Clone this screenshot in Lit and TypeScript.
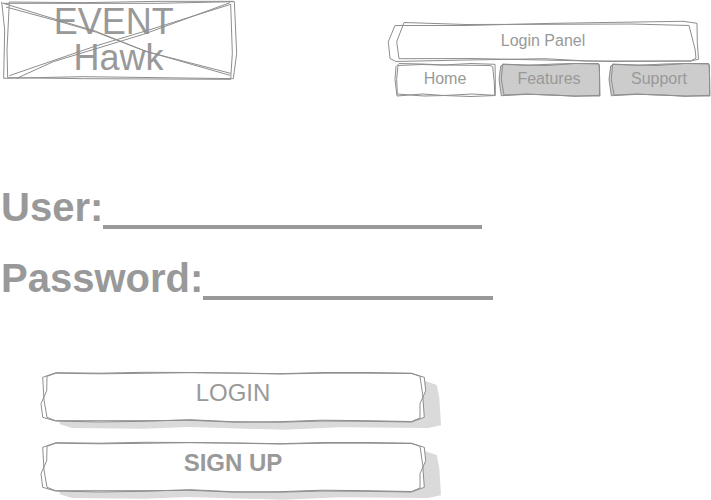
import { LitElement, html, css, svg } from "lit";
import { customElement, property } from "lit/decorators.js";

interface Sketch {
  width: number;
  height: number;
  shadow?: string;
  strokes: string[];
}

const logoSketch: Sketch = {
  width: 711,
  height: 240,
  strokes: [
    "M5 5L14 90L11 235L250 230L700 236L710 160L703 5L470 10L8 10",
    "M28 6L250 8L480 4L702 4M28 6L21 150L23 233L250 236L692 238L697 160L692 12",
    "M10 10L180 62L285 93L435 153L690 226M18 21L180 65L290 97L440 155L692 220",
    "M690 8L430 103L160 185L50 235M692 13L440 92L290 137L28 227",
  ],
};

const panelSketch: Sketch = {
  width: 312,
  height: 42,
  strokes: [
    "M8 5.5L79 5.5L167 3.3L296 1.3L310 3.3L310.3 22.7L311.5 39.3L304 41L200 41L158 38.7L64 40.3L9 41.5L3 38.5L1.3 21.7Z",
    "M17 2.5L79 4.5L158 4.3L245 4L302 5.5L308 29L309 38L304 41L226 41.5L85 38.5L12 38.7L9.7 21.7Z",
  ],
};

const homeSketch: Sketch = {
  width: 102,
  height: 36,
  strokes: [
    "M5 1.5L28 2L49 3L77 1.5L101 2.3L101.3 17.3L101.3 33.5L77 34.5L50 33.5L28 32L3 34L1 17.3L2 4.5Z",
    "M4 3.5L28 2.5L49 3L96 3.5L98.7 4.7L100.3 20.7L100.7 33.3L78 32L50 33.5L30 34L3.3 32L2.7 17.3Z",
  ],
};

const tabSketch: Sketch = {
  width: 102,
  height: 36,
  strokes: [
    "M4.7 2L29 3.3L57 2L77 1.5L101 2L101.7 17L102 34L77 34L48 33L29 32L6 33L3.3 17.3Z",
    "M2.7 4L5 2.5L29 3L49 3.5L77 1.5L100.5 1.5L101.5 4L101.5 33.3L77 34.3L56 33L30 32.3L3.3 33.7L1 17.3Z",
  ],
};

const buttonSketch: Sketch = {
  width: 386,
  height: 51,
  shadow:
    "M19 49L20 52.3L32 56L104 56.7L149 55L243 57.7L300 55.3L388 56L401 53.3L399.3 25.7L396.7 13L385 9L300 9Z",
  strokes: [
    "M16 .7L60 1.2L104 .3L150 .5L196 1.2L240 2L284 1.2L328 1.2L371.5 1.5L384.3 5.3L385.7 18.7L380 31.7L380 46L371.5 49.5L326 48.7L282 48.2L240 49.7L196 50.2L150 48.3L104 48.7L60 48.7L15.5 48.7L7 45.3L4 28L2.7 5.3Z",
    "M16 1.2L60 1.8L104 1.3L150 .7L196 1L240 1.7L284 .5L328 .5L371.5 1.2L380 4.3L382.7 22.7L384.3 45.3L371.5 50L326 49.3L282 49L240 50.2L192 49.7L150 47.7L104 49.3L60 50L15.5 49L2.7 45.3L1 31.7L6.7 18.7L7 4.3Z",
  ],
};

@customElement("sketch-frame")
class SketchFrame extends LitElement {
  @property({ attribute: false }) sketch: Sketch = panelSketch;

  static styles = css`
    :host {
      position: absolute;
      inset: 0;
      pointer-events: none;
    }
    .drawing {
      display: block;
      width: 100%;
      height: 100%;
      overflow: visible;
    }
    .face {
      fill: var(--sketch-fill, none);
    }
    .line {
      fill: none;
      stroke: #8e8e8e;
      stroke-width: 1;
      vector-effect: non-scaling-stroke;
    }
    .shadow {
      fill: #dadada;
    }
  `;

  render() {
    const { width, height, shadow, strokes } = this.sketch;
    return html`<svg
      class="drawing"
      viewBox="0 0 ${width} ${height}"
      preserveAspectRatio="none"
      aria-hidden="true"
    >
      ${shadow ? svg`<path class="shadow" d=${shadow} />` : null}
      ${strokes.map((d) => svg`<path class="face" d=${d} />`)}
      ${strokes.map((d) => svg`<path class="line" d=${d} />`)}
    </svg>`;
  }
}

@customElement("app-root")
class AppRoot extends LitElement {
  static styles = css`
    :host {
      display: block;
      box-sizing: border-box;
      min-height: 100vh;
      background: #fff;
      color: #999;
      font-family: "Liberation Sans", Arial, sans-serif;
    }
    .header {
      display: flex;
      justify-content: space-between;
      align-items: flex-start;
      gap: 24px;
    }
    .logo {
      position: relative;
      box-sizing: border-box;
      flex: 0 0 237px;
      height: 80px;
      margin: 0;
      padding-top: 4px;
      font-size: 36px;
      line-height: 36px;
      font-weight: 400;
      text-align: center;
      white-space: pre;
    }
    .side {
      flex: 0 1 324px;
      padding-top: 20px;
    }
    .panel,
    .tab {
      position: relative;
      box-sizing: border-box;
      font-size: 16px;
      line-height: 20px;
      font-weight: 400;
      text-align: center;
    }
    .panel {
      height: 42px;
      margin: 0 12px 0 0;
      padding-top: 11px;
    }
    .tabs {
      display: flex;
      gap: 2px;
      padding: 0 1px 0 7px;
    }
    .tab {
      flex: 1;
      height: 36px;
      padding-top: 7px;
      color: inherit;
      text-decoration: none;
    }
    .muted {
      --sketch-fill: #ccc;
    }
    .apart {
      margin-left: 6px;
    }
    .label {
      position: relative;
    }
    .form {
      margin-top: 85px;
      padding: 0 1px;
    }
    .field {
      display: flex;
      height: 48px;
      margin-bottom: 23px;
      font-size: 40px;
      line-height: 48px;
      font-weight: 700;
    }
    .input {
      box-sizing: border-box;
      flex: 0 1 379px;
      min-width: 0;
      height: 46px;
      margin: 0;
      padding: 0;
      border: 0;
      border-bottom: 4px solid #999;
      border-radius: 0;
      outline: 0;
      background: none;
      color: inherit;
      font: inherit;
    }
    .short {
      flex-basis: 290px;
    }
    .actions {
      display: flex;
      flex-direction: column;
      gap: 19px;
      max-width: 386px;
      margin: 70px 0 0 39px;
      padding-bottom: 7px;
    }
    .button {
      --sketch-fill: #fff;
      position: relative;
      box-sizing: border-box;
      height: 51px;
      margin: 0;
      padding: 0 0 9px;
      border: 0;
      background: none;
      color: inherit;
      font-family: inherit;
      font-size: 24px;
      line-height: 28px;
      font-weight: 400;
      cursor: pointer;
    }
    .strong {
      font-weight: 700;
    }
  `;

  render() {
    return html`
      <header class="header">
        <h1 class="logo">${"EVENT \nHawk"}<sketch-frame .sketch=${logoSketch}></sketch-frame></h1>
        <div class="side">
          <h2 class="panel">
            <sketch-frame .sketch=${panelSketch}></sketch-frame>
            <span class="label">Login Panel</span>
          </h2>
          <nav class="tabs">
            <a class="tab" href="#home">
              <sketch-frame .sketch=${homeSketch}></sketch-frame>
              <span class="label">Home</span>
            </a>
            <a class="tab muted" href="#features">
              <sketch-frame .sketch=${tabSketch}></sketch-frame>
              <span class="label">Features</span>
            </a>
            <a class="tab muted apart" href="#support">
              <sketch-frame .sketch=${tabSketch}></sketch-frame>
              <span class="label">Support</span>
            </a>
          </nav>
        </div>
      </header>
      <form class="form" @submit=${(e: Event) => e.preventDefault()}>
        <div class="field">
          <label for="user">User:</label>
          <input class="input" id="user" type="text" autocomplete="username" />
        </div>
        <div class="field">
          <label for="password">Password:</label>
          <input class="input short" id="password" type="password" autocomplete="current-password" />
        </div>
        <div class="actions">
          <button class="button" type="submit">
            <sketch-frame .sketch=${buttonSketch}></sketch-frame>
            <span class="label">LOGIN</span>
          </button>
          <button class="button strong" type="button">
            <sketch-frame .sketch=${buttonSketch}></sketch-frame>
            <span class="label">SIGN UP</span>
          </button>
        </div>
      </form>
    `;
  }
}
